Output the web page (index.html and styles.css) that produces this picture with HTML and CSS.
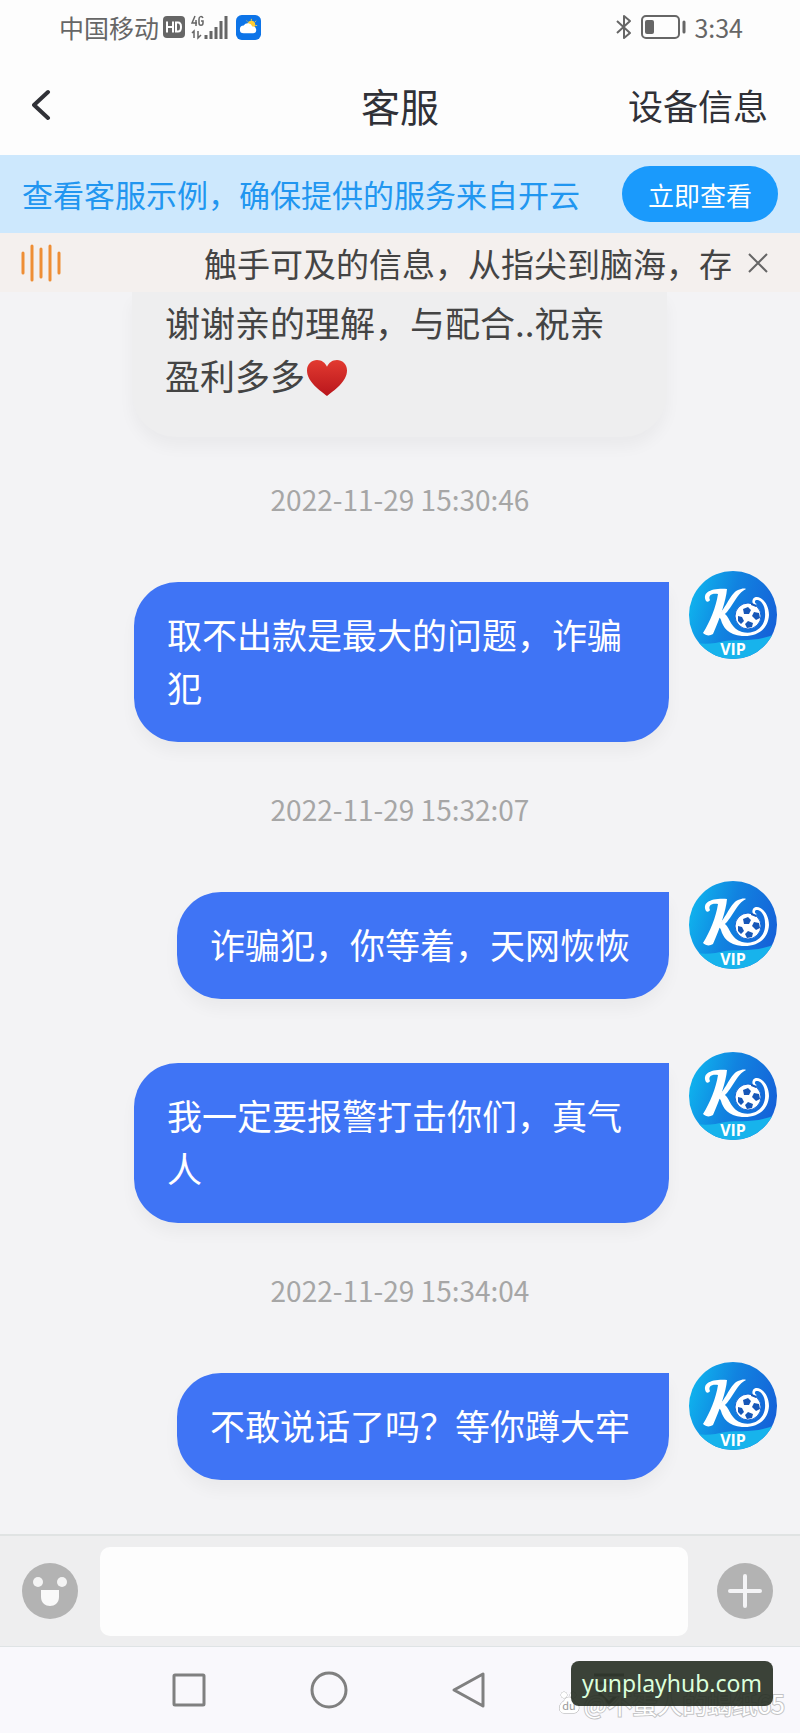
FILE: index.html
```html
<!DOCTYPE html>
<html lang="zh-CN">
<head>
  <meta charset="UTF-8">
  <meta name="viewport" content="width=device-width, initial-scale=1">
  <title>客服</title>
  <link rel="stylesheet" href="styles.css">
</head>
<body>

  <!-- shared avatar -->
  <svg class="defs" width="0" height="0" aria-hidden="true">
    <defs>
      <linearGradient id="avatarBg" x1="0" y1="0.3" x2="1" y2="0.6">
        <stop offset="0" stop-color="#0fb4ee"/>
        <stop offset="0.45" stop-color="#1183e0"/>
        <stop offset="1" stop-color="#1561d8"/>
      </linearGradient>
      <clipPath id="avatarClip"><circle cx="44" cy="44" r="44"/></clipPath>
      <symbol id="avatar" viewBox="0 0 88 88">
        <g clip-path="url(#avatarClip)">
          <rect width="88" height="88" fill="url(#avatarBg)"/>
          <path d="M0 70 C12 74 24 73 36 70 C50 68 68 72 88 62 V88 H0Z" fill="#17b3ec"/>
          <path d="M17 30 C13 22 21 17 38 18 C37 30 31 47 24 63 C21 65 17 65 14 62 C21 51 27 36 29 23 C22 22 19 25 21 29 C20 31 18 31 17 30Z" fill="#fff"/>
          <path d="M57 18 C50 21 46 30 41 37 C38 41 37 42 36 43 C41 47 42 58 53 61 C65 64 75 57 76 46 C77 35 72 28 67 29 C65 30 66 33 68 33 C65 35 62 32 64 28 C68 22 80 30 80 44 C79 60 66 66 53 65 C39 64 34 56 32 49 C31 46 29 46 26 46 C36 41 41 22 49 19 C52 18 55 17 57 18Z" fill="#fff"/>
          <circle cx="59" cy="45" r="13" fill="#fff" stroke="#1668d6" stroke-width="1"/>
          <path d="M54 38l5-2 3 3-2 4-5 0zM65 41l5 1 1 5-4 2-4-4zM59 50l5 2-1 4-5 1-2-4zM49 45l4 1 2 4-3 3-3-3zM62 32l5 2 0 2-5-2z" fill="#1757b8"/>
        </g>
        <text x="44" y="84" text-anchor="middle" class="avatar-vip">VIP</text>
      </symbol>
    </defs>
  </svg>

  <div class="app">
    <div class="status">
      <span class="carrier">中国移动</span>
      <svg width="22" height="22" viewBox="0 0 22 22"><rect width="22" height="22" rx="4" fill="#666"/><path d="M4 5.500V16.500M10 5.500V16.500M4 11H10M13 5.500V16.500M13 6.500H15C19 6.500 19 15.500 15 15.500H13" fill="none" stroke="#fff" stroke-width="2"/></svg>
      <svg class="signal" width="38" height="26" viewBox="0 0 38 26">
        <path d="M4 2L1 9H6M5 6V12M12 4C11 2 8 2 8 5V9C8 12 12 12 12 9V7H10" fill="none" stroke="#666" stroke-width="1.500"/>
        <path d="M1 19L3 17V24M7 17V24L10 21" fill="none" stroke="#666" stroke-width="1.500"/>
        <path d="M15 21V25M20 17V25M25 13V25M30 7V25M35 2V25" stroke="#666" stroke-width="3"/>
      </svg>
      <svg width="25" height="25" viewBox="0 0 26 26"><rect width="26" height="26" rx="6" fill="#0d74e8"/><circle cx="16" cy="10" r="4" fill="#fc3"/><path d="M16 4v2M21 6l-1 1M22 11h-2M11 6l1 1" stroke="#fc3"/><path d="M8 19a4 4 0 0 1 0-8 5 5 0 0 1 9 1 3.500 3.500 0 0 1 1 7z" fill="#fff"/></svg>
      <svg class="bluetooth" width="18" height="26" viewBox="0 0 18 26"><path d="M2 7L15 19L9 24V2L15 7L2 19" fill="none" stroke="#666" stroke-width="2" stroke-linejoin="round"/></svg>
      <svg class="battery" width="45" height="24" viewBox="0 0 45 24"><rect x="1" y="1" width="37" height="22" rx="4" fill="none" stroke="#666" stroke-width="2"/><rect x="4" y="5" width="9" height="14" rx="2" fill="#666"/><path d="M43 7V17" stroke="#666" stroke-width="3" stroke-linecap="round"/></svg>
      <time class="clock">3:34</time>
    </div>

    <header class="header">
      <button class="icon-btn back" aria-label="返回">
        <svg width="22" height="32" viewBox="0 0 22 32"><path d="M16 3L2 16L16 29" fill="none" stroke="#303137" stroke-width="4" stroke-linecap="round" stroke-linejoin="round"/></svg>
      </button>
      <h1 class="title">客服</h1>
      <a class="device" href="#">设备信息</a>
    </header>

    <div class="banner">
      <span class="banner-text">查看客服示例，确保提供的服务来自开云</span>
      <button class="banner-btn">立即查看</button>
    </div>

    <div class="notice">
      <svg width="40" height="38" viewBox="0 0 40 38"><path d="M2 9V29M11 2V36M20 5V33M29 2V36M38 9V29" stroke="#ee8e35" stroke-width="3" stroke-linecap="round"/></svg>
      <p class="notice-text">触手可及的信息，从指尖到脑海，存</p>
      <button class="icon-btn" aria-label="关闭">
        <svg width="20" height="20" viewBox="0 0 20 20"><path d="M1 1L19 19M19 1L1 19" stroke="#666" stroke-width="2"/></svg>
      </button>
    </div>

    <main class="chat">
      <div class="bubble received">谢谢亲的理解，与配合..祝亲盈利多多<svg class="heart" width="40" height="36" viewBox="0 0 40 38" preserveAspectRatio="none"><defs><linearGradient id="heartBg" x1="0" y1="0" x2="0" y2="1"><stop offset="0" stop-color="#e23a30"/><stop offset="1" stop-color="#b9161c"/></linearGradient></defs><path d="M20 38C13 32 0 23 0 11C0 4 5 0 10 0C15 0 18 3 20 7C22 3 25 0 30 0C35 0 40 4 40 11C40 23 27 32 20 38Z" fill="url(#heartBg)"/></svg></div>

      <time class="stamp">2022-11-29 15:30:46</time>
      <div class="row">
        <div class="bubble sent">取不出款是最大的问题，诈骗犯</div>
        <svg class="avatar"><use href="#avatar"/></svg>
      </div>

      <time class="stamp">2022-11-29 15:32:07</time>
      <div class="row">
        <div class="bubble sent">诈骗犯，你等着，天网恢恢</div>
        <svg class="avatar"><use href="#avatar"/></svg>
      </div>
      <div class="row">
        <div class="bubble sent">我一定要报警打击你们，真气人</div>
        <svg class="avatar"><use href="#avatar"/></svg>
      </div>

      <time class="stamp">2022-11-29 15:34:04</time>
      <div class="row">
        <div class="bubble sent">不敢说话了吗？等你蹲大牢</div>
        <svg class="avatar"><use href="#avatar"/></svg>
      </div>
    </main>

    <form class="composer">
      <button type="button" class="icon-btn" aria-label="表情">
        <svg width="56" height="56" viewBox="0 0 56 56"><circle cx="28" cy="28" r="28" fill="#b3b3b3"/><circle cx="16" cy="19" r="5" fill="#f4f4f4"/><circle cx="40" cy="19" r="5" fill="#f4f4f4"/><path d="M19 27H37V34C37 46 19 46 19 34Z" fill="#f9f9f9"/></svg>
      </button>
      <input class="message" type="text" aria-label="消息">
      <button type="button" class="icon-btn" aria-label="更多">
        <svg width="56" height="56" viewBox="0 0 56 56"><circle cx="28" cy="28" r="28" fill="#b3b3b3"/><path d="M28 13V43M13 28H43" stroke="#f4f4f6" stroke-width="4" stroke-linecap="round"/></svg>
      </button>
    </form>

    <nav class="nav">
      <button class="icon-btn" aria-label="最近任务"><svg width="38" height="38" viewBox="0 0 38 38"><rect x="4" y="4" width="30" height="30" rx="1" fill="none" stroke="#808080" stroke-width="3"/></svg></button>
      <button class="icon-btn" aria-label="主屏幕"><svg width="38" height="38" viewBox="0 0 38 38"><circle cx="19" cy="19" r="17" fill="none" stroke="#808080" stroke-width="3"/></svg></button>
      <button class="icon-btn" aria-label="后退"><svg width="38" height="38" viewBox="0 0 38 38"><path d="M33 3V35L4 19Z" fill="none" stroke="#808080" stroke-width="3" stroke-linejoin="round"/></svg></button>
      <button class="icon-btn" aria-label="收起"><svg width="38" height="38" viewBox="0 0 38 38"><path d="M4 4H34M4 12H34M9 22L19 32L29 22" fill="none" stroke="#808080" stroke-width="3"/></svg></button>
      <span class="watermark"><svg width="22" height="24" viewBox="0 0 22 24"><path d="M6 10C8 5 14 5 16 10C23 13 22 22 16 22H6C0 22 0 13 6 10Z" fill="#fff" stroke="#aaa"/><circle cx="6" cy="4" r="3" fill="#fff" stroke="#aaa"/><circle cx="15" cy="4" r="3" fill="#fff" stroke="#aaa"/><text x="11" y="19" text-anchor="middle" class="watermark-du">du</text></svg>@不蛋人的蝎纸65</span>
      <span class="site-tag">yunplayhub.com</span>
    </nav>
  </div>

</body>
</html>
```
FILE: styles.css
```css
* { box-sizing: border-box; }
body { margin: 0; background: #f3f3f5; color: #303137; font-family: "Noto Sans CJK SC", sans-serif; }
button, input { font-family: inherit; }
svg { display: block; flex: none; }
.defs { position: absolute; }
.app { display: flex; flex-direction: column; min-height: 100vh; }
.icon-btn { flex: none; padding: 0; border: 0; background: none; }

.status { display: flex; align-items: center; gap: 4px; height: 54px; padding: 0 57px 0 59px; background: #fdfdfd; color: #666; }
.carrier { font-size: 25px; line-height: 32px; }
.signal { margin: 0 3px 0 2px; }
.bluetooth { margin-left: auto; }
.battery { margin: 0 4px; }
.clock { font-size: 25px; line-height: 32px; }

.header { display: grid; grid-template-columns: 1fr auto 1fr; align-items: center; height: 101px; padding: 0 32px; background: #fdfdfd; }
.back { justify-self: start; }
.title { margin: 0; font-size: 39px; line-height: 56px; font-weight: 400; }
.device { justify-self: end; color: inherit; font-size: 35px; line-height: 53px; text-decoration: none; }

.banner { display: flex; align-items: center; justify-content: space-between; height: 78px; padding: 0 22px; background: #cde8fd; }
.banner-text { color: #2196f0; font-size: 31px; line-height: 44px; }
.banner-btn { width: 156px; height: 56px; padding: 0; border: 0; border-radius: 28px; background: #1a9afc; color: #fff; font-size: 26px; }

.notice { display: flex; align-items: center; height: 59px; padding: 0 32px 0 21px; background: #f4f0ee; }
.notice-text { flex: 1; margin: 0 16px 0 0; font-size: 33px; line-height: 44px; text-align: right; white-space: nowrap; color: #444; }

.chat { flex: 1; display: flex; flex-direction: column; padding: 0 23px; }
.bubble { max-width: 535px; padding: 25px 39px 29px 33px; border-radius: 44px 0 44px 44px; font-size: 35px; line-height: 53px; box-shadow: 0 10px 16px rgba(0, 0, 0, 0.04); }
.received { align-self: flex-start; margin-left: 109px; padding-top: 3px; padding-bottom: 36px; border-radius: 0 0 44px 44px; background: #eeeeef; color: #444; }
.heart { display: inline-block; margin-left: 2px; vertical-align: -6px; }
.sent { margin-top: 11px; background: #3f74f5; color: #fff; }
.row { display: flex; justify-content: flex-end; align-items: flex-start; gap: 20px; margin-bottom: 53px; }
.avatar { width: 88px; height: 88px; }
.avatar-vip { fill: #fff; font: 700 16px "Open Sans", sans-serif; }
.stamp { margin: 42px 0 52px; color: #a6a6a6; font-size: 28px; line-height: 40px; text-align: center; }
.row + .stamp { margin-top: -6px; }

.composer { display: flex; align-items: center; gap: 22px; height: 113px; padding: 0 27px 0 22px; border-top: 2px solid #e0e3e3; border-bottom: 1px solid #dfe3e5; background: #eeeeef; }
.message { flex: 1; min-width: 0; height: 89px; margin-right: 7px; padding: 0 20px; border: 0; border-radius: 10px; background: #fdfdfd; font-size: 35px; }

.nav { position: relative; display: flex; align-items: center; justify-content: space-between; height: 86px; padding: 0 172px 0 170px; background: #f9f8fc; }
.watermark { position: absolute; right: 15px; bottom: 12px; display: flex; align-items: center; gap: 4px; color: #fff; font-size: 25px; line-height: 36px; -webkit-text-stroke: 2px #c4c4c6; paint-order: stroke fill; }
.watermark-du { fill: #999; font-size: 11px; -webkit-text-stroke: 0; }
.site-tag { position: absolute; right: 27px; bottom: 27px; padding: 0 11px; border-radius: 8px; background: rgba(38, 45, 34, 0.9); color: #dcffdc; font-family: "Noto Sans", sans-serif; font-size: 23px; line-height: 45px; }
```
